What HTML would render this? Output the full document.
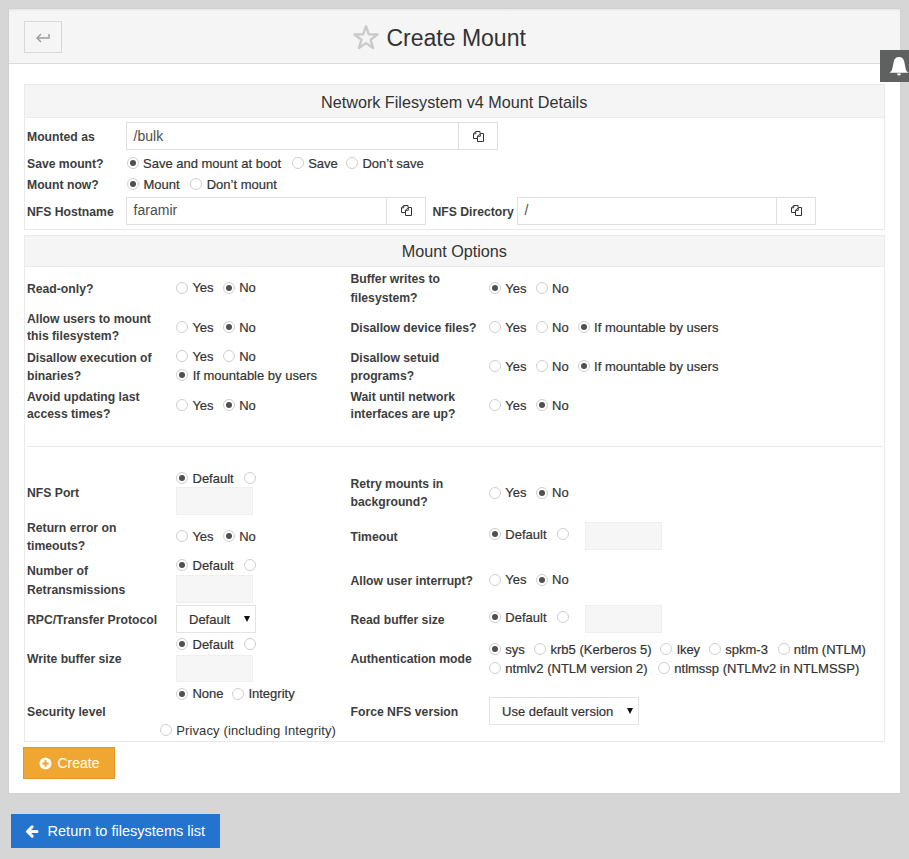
<!DOCTYPE html><html><head><meta charset="utf-8"><style>
*{margin:0;padding:0;box-sizing:border-box}
html,body{width:909px;height:859px;overflow:hidden;background:#d6d6d6;font-family:"Liberation Sans",sans-serif;position:relative}
.t{position:absolute;white-space:nowrap}
.v{-webkit-text-stroke:0.2px #333}
.panel{position:absolute;left:9px;top:9px;width:891px;height:784px;background:#fff;box-shadow:0 0 0 1px #d1d1d1}
.hdr{position:absolute;left:9px;top:9px;width:891px;height:55px;background:linear-gradient(#e7e7e7,#f5f5f5 3px);border-bottom:1px solid #dcdcdc}
.bk{position:absolute;border:1px solid #d8d8d8;background:#f5f5f5}
.bell{position:absolute;left:880px;top:50px;width:29px;height:32px;background:#5f6060}
.box{position:absolute;border:1px solid #eaeaea;background:#fff}
.bh{position:absolute;background:#f5f5f5}
.bl{position:absolute;background:#ebebeb}
.hr{position:absolute;background:#ebebeb}
.inp{position:absolute;border:1px solid #e0e0e0;background:#fff}
.dv{position:absolute;background:#e0e0e0}
.dis{position:absolute;border:1px solid #efefef;background:#f6f6f6}
.sel{position:absolute;border:1px solid #e3e3e3;background:#fff}
.tri{position:absolute;width:0;height:0;border-left:3.5px solid transparent;border-right:3.5px solid transparent;border-top:6px solid #111}
.r{position:absolute;width:12px;height:12px;border:1px solid #cfcfcf;border-radius:50%;background:#fff}
.r b{position:absolute;left:2px;top:2px;width:6px;height:6px;border-radius:50%;background:#505050}
.bc{position:absolute;background:#f0a732;border:1px solid #e0962a}
.br{position:absolute;background:#2473cd}
</style></head><body><div class="panel"></div>
<div class="hdr"></div>
<div class="bk" style="left:24px;top:21px;width:38px;height:32px;"></div>
<svg width="20" height="14" viewBox="0 0 20 14" style="position:absolute;left:34px;top:31px" fill="none" stroke="#9c9c9c" stroke-width="1.4"><path d="M15 3v4H3"/><path d="M7 3L3 7l4 4"/></svg>
<svg width="28" height="28" viewBox="0 0 28 28" style="position:absolute;left:351.75px;top:23.95px" fill="none" stroke="#cacaca" stroke-width="2.4" stroke-linejoin="round"><path d="M14.00 2.20 L16.84 10.38 L25.51 10.56 L18.60 15.80 L21.11 24.09 L14.00 19.14 L6.89 24.09 L9.40 15.80 L2.49 10.56 L11.16 10.38Z"/></svg>
<div class="t" style="left:386.5px;top:26.7px;font-size:23px;line-height:23px;color:#333;letter-spacing:0px">Create Mount</div>
<div class="bell"><svg width="29" height="32" viewBox="0 0 29 32" style="position:absolute;left:0;top:0" fill="#fff"><path d="M19 7C16 7 14.3 8.8 13.8 11.5L12.2 19.3C11.7 21 10.7 22 9.5 22.8H28.5C27.3 22 26.3 21 25.8 19.3L24.2 11.5C23.7 8.8 22 7 19 7Z"/><path d="M17 23.5a2 2 0 0 0 4 0Z"/></svg></div>
<div class="box" style="left:24px;top:84px;width:861px;height:146px;"></div>
<div class="bh" style="left:25px;top:85px;width:859px;height:32px;"></div>
<div class="bl" style="left:25px;top:117px;width:859px;height:1px;"></div>
<div class="t" style="left:321.0px;top:94.3px;font-size:16.2px;line-height:16.2px;color:#333;">Network Filesystem v4 Mount Details</div>
<div class="t" style="left:27.0px;top:131.3px;font-size:12.2px;line-height:12.2px;font-weight:700;color:#3d3d3d;">Mounted as</div>
<div class="inp" style="left:126px;top:122px;width:372px;height:28px;"></div><div class="dv" style="left:458px;top:122px;width:1px;height:28px;"></div><svg width="13" height="13" viewBox="0 0 13 13" style="position:absolute;left:472px;top:130px" fill="none" stroke="#333" stroke-width="1"><path d="M8 3.2V1.5H3.8L1.5 3.8V8.5H5.2"/><path d="M3.8 1.5V3.8H1.5"/><path d="M5.5 6.3L8.3 3.5H11.5V11.5H5.5Z"/><path d="M8.3 3.5V6.3H5.5"/></svg><div class="t" style="left:133.6px;top:128.8px;font-size:14px;line-height:14px;color:#4d4d4d;">/bulk</div>
<div class="t" style="left:27.0px;top:157.9px;font-size:12.2px;line-height:12.2px;font-weight:700;color:#3d3d3d;">Save mount?</div>
<i class="r" style="left:126.8px;top:156.8px"><b></b></i>
<div class="t v" style="left:143.0px;top:156.6px;font-size:13px;line-height:13px;color:#333;">Save and mount at boot</div>
<i class="r" style="left:291.7px;top:156.8px"></i>
<div class="t v" style="left:308.2px;top:156.6px;font-size:13px;line-height:13px;color:#333;">Save</div>
<i class="r" style="left:345.8px;top:156.8px"></i>
<div class="t v" style="left:362.4px;top:156.6px;font-size:13px;line-height:13px;color:#333;">Don&#8217;t save</div>
<div class="t" style="left:27.0px;top:179.1px;font-size:12.2px;line-height:12.2px;font-weight:700;color:#3d3d3d;">Mount now?</div>
<i class="r" style="left:126.9px;top:178.3px"><b></b></i>
<div class="t v" style="left:143.4px;top:177.8px;font-size:13px;line-height:13px;color:#333;">Mount</div>
<i class="r" style="left:189.8px;top:178.3px"></i>
<div class="t v" style="left:206.7px;top:177.8px;font-size:13px;line-height:13px;color:#333;">Don&#8217;t mount</div>
<div class="t" style="left:27.0px;top:205.8px;font-size:12.2px;line-height:12.2px;font-weight:700;color:#3d3d3d;">NFS Hostname</div>
<div class="inp" style="left:126px;top:197px;width:300px;height:28px;"></div><div class="dv" style="left:386px;top:197px;width:1px;height:28px;"></div><svg width="13" height="13" viewBox="0 0 13 13" style="position:absolute;left:400px;top:204px" fill="none" stroke="#333" stroke-width="1"><path d="M8 3.2V1.5H3.8L1.5 3.8V8.5H5.2"/><path d="M3.8 1.5V3.8H1.5"/><path d="M5.5 6.3L8.3 3.5H11.5V11.5H5.5Z"/><path d="M8.3 3.5V6.3H5.5"/></svg><div class="t" style="left:133.6px;top:202.9px;font-size:14px;line-height:14px;color:#4d4d4d;">faramir</div>
<div class="t" style="left:432.5px;top:205.8px;font-size:12.2px;line-height:12.2px;font-weight:700;color:#3d3d3d;">NFS Directory</div>
<div class="inp" style="left:517px;top:197px;width:299px;height:28px;"></div><div class="dv" style="left:776px;top:197px;width:1px;height:28px;"></div><svg width="13" height="13" viewBox="0 0 13 13" style="position:absolute;left:790px;top:204px" fill="none" stroke="#333" stroke-width="1"><path d="M8 3.2V1.5H3.8L1.5 3.8V8.5H5.2"/><path d="M3.8 1.5V3.8H1.5"/><path d="M5.5 6.3L8.3 3.5H11.5V11.5H5.5Z"/><path d="M8.3 3.5V6.3H5.5"/></svg><div class="t" style="left:524.6px;top:202.9px;font-size:14px;line-height:14px;color:#4d4d4d;">/</div>
<div class="box" style="left:24px;top:235px;width:861px;height:507px;"></div>
<div class="bh" style="left:25px;top:236px;width:859px;height:30px;"></div>
<div class="bl" style="left:25px;top:266px;width:859px;height:1px;"></div>
<div class="t" style="left:401.7px;top:242.8px;font-size:16.2px;line-height:16.2px;color:#333;">Mount Options</div>
<div class="t" style="left:27.0px;top:283.1px;font-size:12.2px;line-height:12.2px;font-weight:700;color:#3d3d3d;">Read-only?</div>
<i class="r" style="left:176.0px;top:281.5px"></i>
<div class="t v" style="left:192.4px;top:281.3px;font-size:13px;line-height:13px;color:#333;">Yes</div>
<i class="r" style="left:223.0px;top:281.5px"><b></b></i>
<div class="t v" style="left:239.2px;top:281.3px;font-size:13px;line-height:13px;color:#333;">No</div>
<div class="t" style="left:350.5px;top:273.0px;font-size:12.2px;line-height:12.2px;font-weight:700;color:#3d3d3d;">Buffer writes to</div>
<div class="t" style="left:350.5px;top:291.6px;font-size:12.2px;line-height:12.2px;font-weight:700;color:#3d3d3d;">filesystem?</div>
<i class="r" style="left:489.0px;top:281.9px"><b></b></i>
<div class="t v" style="left:505.3px;top:281.5px;font-size:13px;line-height:13px;color:#333;">Yes</div>
<i class="r" style="left:536.0px;top:281.9px"></i>
<div class="t v" style="left:552.0px;top:281.5px;font-size:13px;line-height:13px;color:#333;">No</div>
<div class="t" style="left:27.0px;top:313.0px;font-size:12.2px;line-height:12.2px;font-weight:700;color:#3d3d3d;">Allow users to mount</div>
<div class="t" style="left:27.0px;top:330.1px;font-size:12.2px;line-height:12.2px;font-weight:700;color:#3d3d3d;">this filesystem?</div>
<i class="r" style="left:176.0px;top:321.0px"></i>
<div class="t v" style="left:192.4px;top:320.7px;font-size:13px;line-height:13px;color:#333;">Yes</div>
<i class="r" style="left:223.0px;top:321.0px"><b></b></i>
<div class="t v" style="left:239.2px;top:320.7px;font-size:13px;line-height:13px;color:#333;">No</div>
<div class="t" style="left:350.5px;top:322.1px;font-size:12.2px;line-height:12.2px;font-weight:700;color:#3d3d3d;">Disallow device files?</div>
<i class="r" style="left:489.0px;top:321.2px"></i>
<div class="t v" style="left:505.3px;top:320.8px;font-size:13px;line-height:13px;color:#333;">Yes</div>
<i class="r" style="left:536.0px;top:321.2px"></i>
<div class="t v" style="left:552.0px;top:320.8px;font-size:13px;line-height:13px;color:#333;">No</div>
<i class="r" style="left:578.0px;top:321.2px"><b></b></i>
<div class="t v" style="left:594.1px;top:320.8px;font-size:13px;line-height:13px;color:#333;">If mountable by users</div>
<div class="t" style="left:27.0px;top:351.8px;font-size:12.2px;line-height:12.2px;font-weight:700;color:#3d3d3d;">Disallow execution of</div>
<div class="t" style="left:27.0px;top:369.9px;font-size:12.2px;line-height:12.2px;font-weight:700;color:#3d3d3d;">binaries?</div>
<i class="r" style="left:176.0px;top:350.2px"></i>
<div class="t v" style="left:192.4px;top:350.4px;font-size:13px;line-height:13px;color:#333;">Yes</div>
<i class="r" style="left:223.0px;top:350.2px"></i>
<div class="t v" style="left:239.2px;top:350.4px;font-size:13px;line-height:13px;color:#333;">No</div>
<i class="r" style="left:176.0px;top:369.2px"><b></b></i>
<div class="t v" style="left:192.7px;top:368.6px;font-size:13px;line-height:13px;color:#333;">If mountable by users</div>
<div class="t" style="left:350.5px;top:351.8px;font-size:12.2px;line-height:12.2px;font-weight:700;color:#3d3d3d;">Disallow setuid</div>
<div class="t" style="left:350.5px;top:369.9px;font-size:12.2px;line-height:12.2px;font-weight:700;color:#3d3d3d;">programs?</div>
<i class="r" style="left:489.0px;top:360.3px"></i>
<div class="t v" style="left:505.3px;top:360.0px;font-size:13px;line-height:13px;color:#333;">Yes</div>
<i class="r" style="left:536.0px;top:360.3px"></i>
<div class="t v" style="left:552.0px;top:360.0px;font-size:13px;line-height:13px;color:#333;">No</div>
<i class="r" style="left:578.0px;top:360.3px"><b></b></i>
<div class="t v" style="left:594.1px;top:360.0px;font-size:13px;line-height:13px;color:#333;">If mountable by users</div>
<div class="t" style="left:27.0px;top:390.5px;font-size:12.2px;line-height:12.2px;font-weight:700;color:#3d3d3d;">Avoid updating last</div>
<div class="t" style="left:27.0px;top:408.2px;font-size:12.2px;line-height:12.2px;font-weight:700;color:#3d3d3d;">access times?</div>
<i class="r" style="left:176.0px;top:399.3px"></i>
<div class="t v" style="left:192.4px;top:399.3px;font-size:13px;line-height:13px;color:#333;">Yes</div>
<i class="r" style="left:223.0px;top:399.3px"><b></b></i>
<div class="t v" style="left:239.2px;top:399.3px;font-size:13px;line-height:13px;color:#333;">No</div>
<div class="t" style="left:350.5px;top:390.5px;font-size:12.2px;line-height:12.2px;font-weight:700;color:#3d3d3d;">Wait until network</div>
<div class="t" style="left:350.5px;top:408.2px;font-size:12.2px;line-height:12.2px;font-weight:700;color:#3d3d3d;">interfaces are up?</div>
<i class="r" style="left:489.0px;top:399.3px"></i>
<div class="t v" style="left:505.3px;top:399.3px;font-size:13px;line-height:13px;color:#333;">Yes</div>
<i class="r" style="left:536.0px;top:399.3px"><b></b></i>
<div class="t v" style="left:552.0px;top:399.3px;font-size:13px;line-height:13px;color:#333;">No</div>
<div class="hr" style="left:27px;top:446px;width:856px;height:1px;"></div>
<div class="t" style="left:27.0px;top:486.7px;font-size:12.2px;line-height:12.2px;font-weight:700;color:#3d3d3d;">NFS Port</div>
<i class="r" style="left:176.0px;top:472.0px"><b></b></i>
<div class="t v" style="left:192.5px;top:471.6px;font-size:13px;line-height:13px;color:#333;">Default</div>
<i class="r" style="left:243.7px;top:472.0px"></i>
<div class="dis" style="left:176px;top:487px;width:77px;height:28px;"></div>
<div class="t" style="left:350.5px;top:478.3px;font-size:12.2px;line-height:12.2px;font-weight:700;color:#3d3d3d;">Retry mounts in</div>
<div class="t" style="left:350.5px;top:495.9px;font-size:12.2px;line-height:12.2px;font-weight:700;color:#3d3d3d;">background?</div>
<i class="r" style="left:488.5px;top:486.5px"></i>
<div class="t v" style="left:505.3px;top:486.0px;font-size:13px;line-height:13px;color:#333;">Yes</div>
<i class="r" style="left:536.0px;top:486.5px"><b></b></i>
<div class="t v" style="left:552.0px;top:486.0px;font-size:13px;line-height:13px;color:#333;">No</div>
<div class="t" style="left:27.0px;top:522.4px;font-size:12.2px;line-height:12.2px;font-weight:700;color:#3d3d3d;">Return error on</div>
<div class="t" style="left:27.0px;top:539.8px;font-size:12.2px;line-height:12.2px;font-weight:700;color:#3d3d3d;">timeouts?</div>
<i class="r" style="left:176.0px;top:530.3px"></i>
<div class="t v" style="left:192.4px;top:530.0px;font-size:13px;line-height:13px;color:#333;">Yes</div>
<i class="r" style="left:222.5px;top:530.3px"><b></b></i>
<div class="t v" style="left:239.2px;top:530.0px;font-size:13px;line-height:13px;color:#333;">No</div>
<div class="t" style="left:350.5px;top:530.7px;font-size:12.2px;line-height:12.2px;font-weight:700;color:#3d3d3d;">Timeout</div>
<i class="r" style="left:488.5px;top:528.0px"><b></b></i>
<div class="t v" style="left:505.3px;top:527.6px;font-size:13px;line-height:13px;color:#333;">Default</div>
<i class="r" style="left:556.5px;top:528.0px"></i>
<div class="dis" style="left:585px;top:522px;width:77px;height:28px;"></div>
<div class="t" style="left:27.0px;top:565.1px;font-size:12.2px;line-height:12.2px;font-weight:700;color:#3d3d3d;">Number of</div>
<div class="t" style="left:27.0px;top:583.5px;font-size:12.2px;line-height:12.2px;font-weight:700;color:#3d3d3d;">Retransmissions</div>
<i class="r" style="left:176.0px;top:559.1px"><b></b></i>
<div class="t v" style="left:192.5px;top:558.7px;font-size:13px;line-height:13px;color:#333;">Default</div>
<i class="r" style="left:243.7px;top:559.1px"></i>
<div class="dis" style="left:176px;top:575px;width:77px;height:28px;"></div>
<div class="t" style="left:350.5px;top:574.8px;font-size:12.2px;line-height:12.2px;font-weight:700;color:#3d3d3d;">Allow user interrupt?</div>
<i class="r" style="left:488.5px;top:573.7px"></i>
<div class="t v" style="left:505.3px;top:573.3px;font-size:13px;line-height:13px;color:#333;">Yes</div>
<i class="r" style="left:536.0px;top:573.7px"><b></b></i>
<div class="t v" style="left:552.0px;top:573.3px;font-size:13px;line-height:13px;color:#333;">No</div>
<div class="t" style="left:27.0px;top:613.8px;font-size:12.2px;line-height:12.2px;font-weight:700;color:#3d3d3d;">RPC/Transfer Protocol</div>
<div class="sel" style="left:176px;top:605px;width:80px;height:28px;"></div><div class="t v" style="left:189.0px;top:612.5px;font-size:13px;line-height:13px;color:#333;">Default</div><div class="tri" style="left:244px;top:616.0px"></div>
<div class="t" style="left:350.5px;top:614.1px;font-size:12.2px;line-height:12.2px;font-weight:700;color:#3d3d3d;">Read buffer size</div>
<i class="r" style="left:488.5px;top:611.4px"><b></b></i>
<div class="t v" style="left:505.3px;top:611.0px;font-size:13px;line-height:13px;color:#333;">Default</div>
<i class="r" style="left:556.5px;top:611.4px"></i>
<div class="dis" style="left:585px;top:605px;width:77px;height:28px;"></div>
<div class="t" style="left:27.0px;top:653.2px;font-size:12.2px;line-height:12.2px;font-weight:700;color:#3d3d3d;">Write buffer size</div>
<i class="r" style="left:176.0px;top:638.2px"><b></b></i>
<div class="t v" style="left:192.5px;top:637.8px;font-size:13px;line-height:13px;color:#333;">Default</div>
<i class="r" style="left:243.7px;top:638.2px"></i>
<div class="dis" style="left:176px;top:655px;width:77px;height:27px;"></div>
<div class="t" style="left:350.5px;top:652.6px;font-size:12.2px;line-height:12.2px;font-weight:700;color:#3d3d3d;">Authentication mode</div>
<i class="r" style="left:488.5px;top:643.2px"><b></b></i>
<div class="t v" style="left:505.3px;top:642.8px;font-size:13px;line-height:13px;color:#333;">sys</div>
<i class="r" style="left:534.0px;top:643.2px"></i>
<div class="t v" style="left:550.5px;top:642.8px;font-size:13px;line-height:13px;color:#333;">krb5 (Kerberos 5)</div>
<i class="r" style="left:660.4px;top:643.2px"></i>
<div class="t v" style="left:677.0px;top:642.8px;font-size:13px;line-height:13px;color:#333;">lkey</div>
<i class="r" style="left:708.5px;top:643.2px"></i>
<div class="t v" style="left:725.3px;top:642.8px;font-size:13px;line-height:13px;color:#333;">spkm-3</div>
<i class="r" style="left:777.9px;top:643.2px"></i>
<div class="t v" style="left:793.7px;top:642.8px;font-size:13px;line-height:13px;color:#333;">ntlm (NTLM)</div>
<i class="r" style="left:488.5px;top:662.0px"></i>
<div class="t v" style="left:505.3px;top:661.6px;font-size:13px;line-height:13px;color:#333;">ntmlv2 (NTLM version 2)</div>
<i class="r" style="left:658.3px;top:662.0px"></i>
<div class="t v" style="left:674.3px;top:661.6px;font-size:13px;line-height:13px;color:#333;">ntlmssp (NTLMv2 in NTLMSSP)</div>
<div class="t" style="left:27.0px;top:706.3px;font-size:12.2px;line-height:12.2px;font-weight:700;color:#3d3d3d;">Security level</div>
<i class="r" style="left:176.0px;top:687.7px"><b></b></i>
<div class="t v" style="left:192.4px;top:687.3px;font-size:13px;line-height:13px;color:#333;">None</div>
<i class="r" style="left:231.8px;top:687.7px"></i>
<div class="t v" style="left:248.4px;top:687.3px;font-size:13px;line-height:13px;color:#333;">Integrity</div>
<i class="r" style="left:159.8px;top:724.3px"></i>
<div class="t" style="left:176.2px;top:723.9px;font-size:13px;line-height:13px;color:#333;letter-spacing:0.13px">Privacy (including Integrity)</div>
<div class="t" style="left:350.5px;top:706.3px;font-size:12.2px;line-height:12.2px;font-weight:700;color:#3d3d3d;">Force NFS version</div>
<div class="sel" style="left:489px;top:697px;width:150px;height:28px;"></div><div class="t v" style="left:502.0px;top:704.5px;font-size:13px;line-height:13px;color:#333;">Use default version</div><div class="tri" style="left:627px;top:708.0px"></div>
<div class="bc" style="left:23px;top:747px;width:92px;height:32px;"></div>
<svg width="13" height="13" viewBox="0 0 13 13" style="position:absolute;left:38.5px;top:756.5px"><circle cx="6.5" cy="6.5" r="6" fill="#fff"/><path d="M6.5 3.3v6.4M3.3 6.5h6.4" stroke="#f0a732" stroke-width="2"/></svg>
<div class="t" style="left:57.5px;top:755.6px;font-size:14px;line-height:14px;color:#fff;">Create</div>
<div class="br" style="left:11px;top:814px;width:209px;height:34px;"></div>
<svg width="16" height="16" viewBox="0 0 16 16" style="position:absolute;left:24px;top:823px" fill="none" stroke="#fff" stroke-width="3" stroke-linecap="round" stroke-linejoin="round"><path d="M3.5 8.5H13M8.2 3.8L3.5 8.5l4.7 4.7"/></svg>
<div class="t" style="left:47.5px;top:823.5px;font-size:14.55px;line-height:14.55px;color:#fff;">Return to filesystems list</div></body></html>
